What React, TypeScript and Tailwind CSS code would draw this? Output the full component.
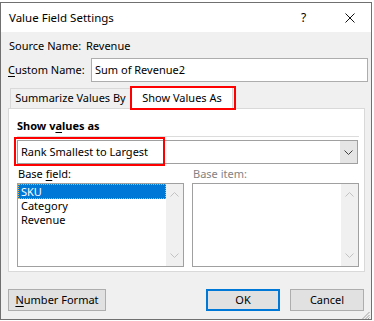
import React from "react";

function Chevron({ up, color = "#606060" }: { up?: boolean; color?: string }) {
  return (
    <svg width="9" height="5" viewBox="0 0 9 5" className="block">
      <path
        d={up ? "M0.5 4.5 L4.5 0.5 L8.5 4.5" : "M0.5 0.5 L4.5 4.5 L8.5 0.5"}
        fill="none"
        stroke={color}
        strokeWidth="1"
      />
    </svg>
  );
}

function ListBox({ items }: { items: string[] }) {
  return (
    <div className="flex h-[84px] w-[167px] border border-[#a0a0a0] bg-white">
      <div className="flex flex-1 flex-col">
        {items.map((item, i) =>
          i === 0 ? (
            <div
              key={item}
              className="h-[15px] border border-dotted border-[#e8b64a] bg-[#0078d7] pl-[2px] leading-[13px] text-white"
            >
              {item}
            </div>
          ) : (
            <div key={item} className="h-[14px] pl-[3px] leading-[14px]">
              {item}
            </div>
          )
        )}
      </div>
      <div className="flex w-[17px] flex-col items-center justify-between bg-[#f0f0f0] py-[8px]">
        <Chevron up color="#c2c2c2" />
        <Chevron color="#c2c2c2" />
      </div>
    </div>
  );
}

function Button({
  label,
  width,
  primary,
  mnemonic,
}: {
  label: string;
  width: string;
  primary?: boolean;
  mnemonic?: boolean;
}) {
  return (
    <div
      className={`flex h-[22px] items-center justify-center bg-[#e1e1e1] ${width} ${
        primary ? "border-2 border-[#0078d7]" : "border border-[#adadad]"
      }`}
    >
      {mnemonic ? (
        <span>
          <span className="underline underline-offset-2">{label[0]}</span>
          {label.slice(1)}
        </span>
      ) : (
        label
      )}
    </div>
  );
}

export default function App() {
  return (
    <div className="h-[321px] w-[374px] overflow-hidden bg-white pt-[2px] font-['Noto_Sans',sans-serif] text-[11px] text-black">
      <div className="flex h-[318px] w-[372px] flex-col border border-[#707070] bg-[#f0f0f0]">
        {/* title bar */}
        <div className="flex h-[29px] items-center bg-white pl-[8px] text-[11.5px]">
          <span className="flex-1">Value Field Settings</span>
          <span className="w-[12px] text-[12px]">?</span>
          <svg width="10" height="10" viewBox="0 0 10 10" className="ml-[32px] mr-[16px]">
            <path d="M0.5 0.5 L9.5 9.5 M9.5 0.5 L0.5 9.5" stroke="#111" strokeWidth="1" />
          </svg>
        </div>

        <div className="flex flex-1 flex-col pl-[7px]">
          <div className="mt-[6px] flex h-[16px] items-center">
            <span className="w-[78px] shrink-0 pl-[1px]">Source Name:</span>
            <span>Revenue</span>
          </div>

          <div className="mt-[4px] flex items-center">
            <span className="w-[83px] shrink-0">
              <span className="underline underline-offset-2">C</span>ustom Name:
            </span>
            <div className="flex h-[24px] w-[277px] items-center border border-[#adadad] bg-white pl-[3px]">
              Sum of Revenue2
            </div>
          </div>

          {/* tabs */}
          <div className="mt-[4px] flex h-[22px] items-end pl-[2px]">
            <div className="flex h-[20px] w-[121px] items-center justify-center border border-b-0 border-[#d9d9d9] bg-[#f0f0f0]">
              Summarize Values By
            </div>
            <div className="relative z-10 -mb-[1px] flex h-[23px] w-[102px] items-center justify-center border border-b-0 border-[#d9d9d9] bg-white">
              Show Values As
              <div className="absolute -left-[2px] -top-[1px] h-[24px] w-[106px] border-2 border-[#ff0000]" />
            </div>
          </div>

          {/* panel */}
          <div className="flex h-[164px] w-[357px] flex-col border border-[#d9d9d9] bg-white pl-[8px]">
            <div className="mt-[9px] flex h-[16px] items-center font-bold">
              Show v<span className="underline underline-offset-2">a</span>lues as
            </div>
            <div className="mr-[5px] mt-[2px] h-[1px] bg-[#dcdcdc]" />
            <div className="relative mt-[3px] flex h-[24px] w-[341px] items-center border border-[#a0a0a0] bg-white">
              <span className="flex-1 pl-[3px]">Rank Smallest to Largest</span>
              <div className="flex h-[22px] w-[17px] items-center justify-center bg-[#e5e5e5]">
                <Chevron color="#404040" />
              </div>
              <div className="absolute -left-[4px] -top-[4px] h-[29px] w-[151px] border-2 border-[#ff0000]" />
            </div>
            <div className="mt-[2px] flex h-[16px] items-center">
              <span className="w-[176px] shrink-0 pl-[1px]">
                Base <span className="underline underline-offset-2">f</span>ield:
              </span>
              <span className="text-[#838383]">Base item:</span>
            </div>
            <div className="mt-[1px] flex gap-[8px]">
              <ListBox items={["SKU", "Category", "Revenue"]} />
              <ListBox items={[]} />
            </div>
          </div>

          {/* buttons */}
          <div className="mt-[17px] flex items-center pr-[7px]">
            <Button label="Number Format" width="w-[98px]" mnemonic />
            <div className="flex-1" />
            <Button label="OK" width="w-[74px]" primary />
            <div className="w-[10px]" />
            <Button label="Cancel" width="w-[74px]" />
          </div>
          <div className="mt-[1px] flex justify-end pr-[1px]">
            <svg width="8" height="7" viewBox="0 0 8 7">
              <path d="M7.5 0 L0.5 7 M7.5 3 L3.5 7 M7.5 5.5 L6 7" stroke="#a0a0a0" strokeWidth="1" />
            </svg>
          </div>
        </div>
      </div>
    </div>
  );
}
